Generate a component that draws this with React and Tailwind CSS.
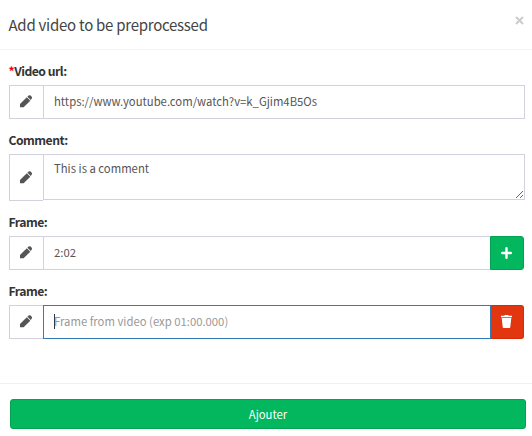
import React from "react";

function Pencil() {
  return (
    <svg width="13" height="13" viewBox="0 0 13 13" fill="#555555">
      <path d="M0 12.2V9L6.8 2.3L10.3 5.7L3.6 12.2Z" />
      <path d="M7.4 1.7L8.6.6Q9.6-.2 10.6.6L11.7 1.7Q12.5 2.6 11.7 3.6L10.8 4.9Z" />
    </svg>
  );
}

function Label({ children, required }) {
  return (
    <div className="-ml-[0.5px] h-[20px] text-[12.2px] leading-[18px] font-bold tracking-[-0.5px] text-[#333333] whitespace-nowrap">
      {required && <span className="text-[#ff0000]">*</span>}
      {children}
    </div>
  );
}

function Addon({ tall }) {
  return (
    <div
      className={`flex w-[34px] shrink-0 items-center justify-center border border-r-0 border-[#d2d1dd] ${tall ? "h-[47px] pb-[1px]" : "h-[34px] pb-[2px]"}`}
    >
      <Pencil />
    </div>
  );
}

const field =
  "block min-w-0 flex-1 rounded-none border bg-white px-[10px] text-[11.3px] text-[#555555] outline-none";

export default function App() {
  return (
    <div className="flex h-[436px] w-[532px] flex-col overflow-hidden bg-white font-['Noto_Sans_CJK_SC','Noto_Sans',sans-serif]">
      <header className="flex h-[50px] justify-between border-b border-[#f4f4f4] pl-[8.5px] pr-[8px]">
        <h4 className="pt-[14px] text-[15px] leading-[22px] tracking-[-0.26px] text-[#444444] whitespace-nowrap">
          Add video to be preprocessed
        </h4>
        <button className="mt-[16px] flex h-[10px]" aria-label="Close">
          <svg width="9" height="9" viewBox="0 0 9 9" fill="none" stroke="#cccccc" strokeWidth="2">
            <path d="M1 1L8 8M8 1L1 8" />
          </svg>
        </button>
      </header>

      <main className="h-[333px] pl-[9px] pr-[7px] pt-[12px]">
        <Label required>Video url:</Label>
        <div className="mt-[3px] flex">
          <Addon />
          <input
            className={`${field} h-[34px] border-[#d2d1dd] pb-[2px]`}
            defaultValue="https://www.youtube.com/watch?v=k_Gjim4B5Os"
          />
        </div>

        <div className="mt-[12px]">
          <Label>Comment:</Label>
        </div>
        <div className="mt-[3px] flex items-start">
          <Addon tall />
          <textarea
            className={`${field} h-[46px] resize overflow-hidden border-[#d2d1dd] py-[4px] leading-[18px]`}
            defaultValue="This is a comment"
          />
        </div>

        <div className="mt-[12px]">
          <Label>Frame:</Label>
        </div>
        <div className="mt-[3px] flex">
          <Addon />
          <input
            className={`${field} h-[34px] border-r-0 border-[#d2d1dd] pb-[2px]`}
            defaultValue="2:02"
          />
          <button
            className="mr-[1px] flex h-[34px] w-[34px] items-center justify-center rounded-r-[3px] border border-[#05a252] bg-[#02b75e] pr-[1px] pb-[1px]"
            aria-label="Add frame"
          >
            <svg width="11" height="12" viewBox="0 0 11 12" fill="none" stroke="#ffffff" strokeWidth="2.4" strokeLinecap="round">
              <path d="M5.5 1.2V10.8M1.2 6H9.8" />
            </svg>
          </button>
        </div>

        <div className="mt-[12px]">
          <Label>Frame:</Label>
        </div>
        <div className="mt-[3px] flex">
          <Addon />
          <div className={`${field} flex! h-[34px] items-center border-[#337ab7] pb-[1px]`}>
            <span className="h-[15px] w-px shrink-0 bg-[#333333]" />
            <span className="-ml-px whitespace-nowrap text-[#999999]">
              Frame from video (exp 01:00.000)
            </span>
          </div>
          <button
            className="mr-[1px] flex h-[34px] w-[33px] items-center justify-center rounded-r-[3px] border border-l-0 border-[#d42b08] bg-[#e23610] pr-[1px] pb-[1px]"
            aria-label="Remove frame"
          >
            <svg width="11" height="13" viewBox="0 0 11 13" fill="#ffffff">
              <path d="M0 .8H3.5V0H7.5V.8H11V2.3H0ZM.7 3H10.3L9.3 12.1Q9.2 13 8.4 13H2.6Q1.8 13 1.7 12.1Z" />
            </svg>
          </button>
        </div>
      </main>

      <footer className="border-t border-[#f0f0f0] pl-[10px] pr-[6px] pt-[15px]">
        <button className="flex h-[30px] w-full items-center justify-center rounded-[3px] border border-[#05a252] bg-[#02b75e] text-[11.3px] leading-[18px] text-white">
          Ajouter
        </button>
      </footer>
    </div>
  );
}
